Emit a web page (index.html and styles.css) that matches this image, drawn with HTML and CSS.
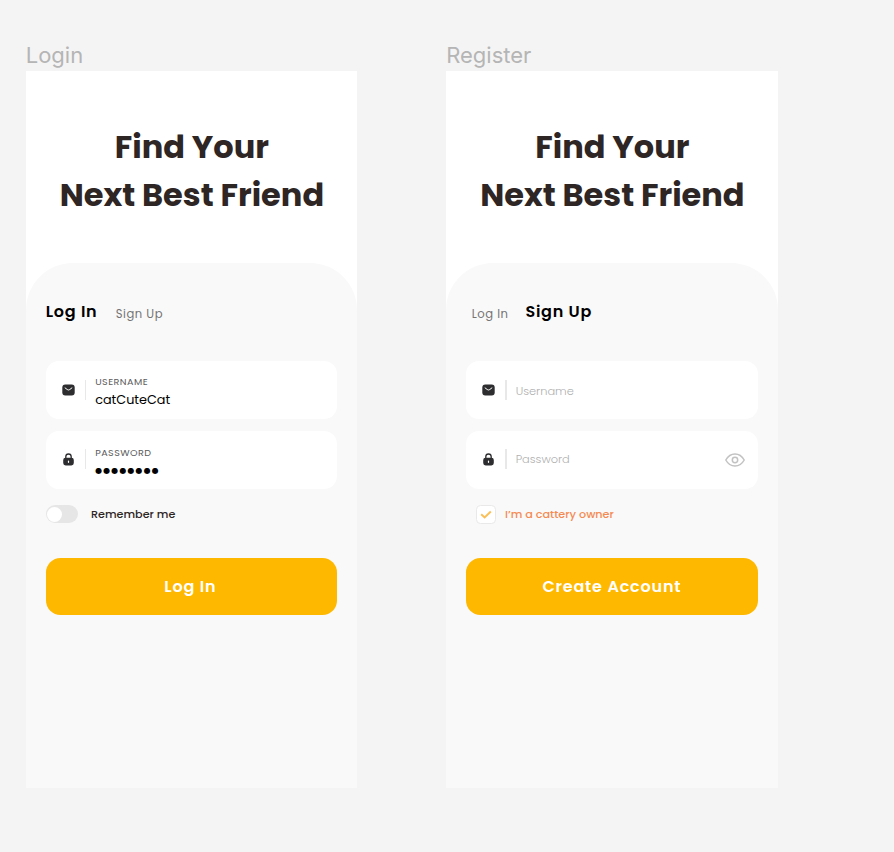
FILE: index.html
```html
<!DOCTYPE html>
<html lang="en">
<head>
<meta charset="utf-8">
<title>Find Your Next Best Friend</title>
<link rel="stylesheet" href="styles.css">
</head>
<body>
<svg class="defs" aria-hidden="true">
  <symbol id="mail" viewBox="0 0 13 12">
    <rect x=".3" y=".4" width="12.4" height="11.2" rx="3" fill="#2d2d30"/>
    <path d="M3.1 3.9 5.2 5.5Q6.5 6.5 7.8 5.5L9.9 3.9" fill="none" stroke="#fff" stroke-width="1" stroke-linecap="round"/>
  </symbol>
  <symbol id="lock" viewBox="0 0 12 13">
    <path d="M3.3 6V3.7a2.7 2.7 0 0 1 5.4 0V6" fill="none" stroke="#2d2d30" stroke-width="1.3"/>
    <rect x=".7" y="4.7" width="10.6" height="7.8" rx="2.4" fill="#2d2d30"/>
    <path d="M6 8v1.3" stroke="#fff" stroke-width="1.2" stroke-linecap="round"/>
  </symbol>
</svg>
<main class="board">
  <section class="artboard">
    <div class="label">Login</div>
    <div class="frame">
      <h1 class="title">Find Your<br>Next Best Friend</h1>
      <div class="panel">
        <nav class="tabs">
          <span class="tab active">Log In</span>
          <span class="tab">Sign Up</span>
        </nav>
        <div class="field">
          <svg class="icon"><use href="#mail"/></svg>
          <span class="divider"></span>
          <div class="entry">
            <span class="caption">USERNAME</span>
            <span class="value">catCuteCat</span>
          </div>
        </div>
        <div class="field">
          <svg class="icon lock"><use href="#lock"/></svg>
          <span class="divider raised"></span>
          <div class="entry secret">
            <span class="caption">PASSWORD</span>
            <span class="dots">●●●●●●●●</span>
          </div>
        </div>
        <div class="option">
          <span class="toggle"></span>
          <span class="remember">Remember me</span>
        </div>
        <button class="submit login">Log In</button>
      </div>
    </div>
  </section>
  <section class="artboard">
    <div class="label">Register</div>
    <div class="frame">
      <h1 class="title">Find Your<br>Next Best Friend</h1>
      <div class="panel">
        <nav class="tabs signup">
          <span class="tab">Log In</span>
          <span class="tab active">Sign Up</span>
        </nav>
        <div class="field">
          <svg class="icon"><use href="#mail"/></svg>
          <span class="divider"></span>
          <span class="placeholder user">Username</span>
        </div>
        <div class="field">
          <svg class="icon lock"><use href="#lock"/></svg>
          <span class="divider raised"></span>
          <span class="placeholder pass">Password</span>
          <svg class="eye" viewBox="0 0 20 14">
            <path d="M.8 7C3 3 6.2.9 10 .9S17 3 19.2 7C17 11 13.8 13.1 10 13.1S3 11 .8 7Z"/>
            <circle cx="10" cy="7" r="2.7"/>
          </svg>
        </div>
        <div class="option owner-row">
          <span class="check"><svg viewBox="0 0 12 9"><path d="M1.2 4.3 4.6 7.4 10.8 1.5"/></svg></span>
          <span class="owner">I’m a cattery owner</span>
        </div>
        <button class="submit">Create Account</button>
      </div>
    </div>
  </section>
</main>
</body>
</html>
```
FILE: styles.css
```css
* { box-sizing: border-box; }
body {
  margin: 0;
  height: 852px;
  background: #f4f4f4;
  font-family: Poppins, Inter, sans-serif;
  overflow: hidden;
}
.defs { display: none; }
.board {
  display: flex;
  gap: 89.1px;
  padding: 41px 0 0 25.7px;
}
.artboard { width: 331.4px; }
.label {
  height: 30px;
  font: 400 22px/28px Inter, sans-serif;
  color: #b5b5b5;
}
.frame {
  display: flex;
  flex-direction: column;
  height: 717px;
  background: #fff;
}
.title {
  flex: none;
  height: 191.6px;
  margin: 0;
  padding: 52px 0 0 1px;
  font-size: 32px;
  line-height: 48px;
  font-weight: 700;
  text-align: center;
  color: #2e2525;
}
.panel {
  flex: 1;
  padding: 37.2px 20px 0 20px;
  border-radius: 47px 47px 0 0;
  background: #f9f9f9;
}
.tabs {
  display: flex;
  gap: 18.4px;
  height: 61.6px;
}
.tabs.signup { gap: 17px; padding-left: 5.6px; }
.tab {
  padding-top: 6px;
  font-size: 11.6px;
  line-height: 16px;
  letter-spacing: .5px;
  color: #747474;
}
.tab.active {
  padding: 0;
  font-size: 16px;
  line-height: 24px;
  font-weight: 600;
  letter-spacing: .75px;
  color: #000;
}
.field {
  display: flex;
  align-items: center;
  height: 57.6px;
  margin-bottom: 12.2px;
  padding: 0 12.5px 0 16px;
  border-radius: 13px;
  background: #fff;
}
.icon { flex: none; width: 13px; height: 12px; }
.icon.lock { height: 13px; margin-bottom: 1px; }
.divider {
  flex: none;
  width: 1.5px;
  height: 20px;
  margin: 0 9px 0 10px;
  background: #e8e8e8;
}
.divider.raised { margin-bottom: 2px; }
.entry {
  display: flex;
  flex-direction: column;
  gap: 3.4px;
  padding-top: 5px;
}
.caption {
  font-size: 9.6px;
  line-height: 12px;
  letter-spacing: .45px;
  color: #5c5c5c;
}
.value { font-size: 12.8px; line-height: 18px; color: #000; }
.secret { padding-top: 7px; }
.dots {
  font: 8px/18px "DejaVu Sans", sans-serif;
  letter-spacing: 1.1px;
  color: #000;
}
.placeholder {
  font-size: 11.4px;
  line-height: 16px;
  font-weight: 300;
  color: #b0b0b0;
}
.placeholder.user { padding-top: 2px; }
.placeholder.pass { padding-bottom: 2px; }
.eye {
  width: 20px;
  height: 14px;
  margin-left: auto;
  fill: none;
  stroke: #c2c2c2;
  stroke-width: 1.5;
}
.option {
  display: flex;
  align-items: center;
  height: 20px;
  margin: 15.6px 0 33.5px;
  font-size: 11.2px;
  line-height: 16px;
  font-weight: 500;
}
.toggle {
  width: 32px;
  height: 18px;
  margin-right: 13.3px;
  padding: 1.5px;
  border-radius: 9px;
  background: #e6e6e6;
}
.toggle::before {
  content: "";
  display: block;
  width: 15px;
  height: 15px;
  border-radius: 50%;
  background: #fff;
}
.remember { color: #2e2525; }
.owner-row { padding-left: 10px; }
.check {
  display: grid;
  place-items: center;
  width: 19.5px;
  height: 19.5px;
  margin-right: 9.4px;
  border: 1px solid #e9e9e9;
  border-radius: 4.5px;
  background: #fff;
}
.check svg {
  width: 12px;
  height: 9px;
  fill: none;
  stroke: #fbbf55;
  stroke-width: 1.9;
}
.owner { color: #f58a52; }
.submit {
  display: block;
  width: 100%;
  height: 57.6px;
  padding: 0;
  border: 0;
  border-radius: 14.5px;
  background: #ffb800;
  font: 600 16px/24px Poppins, Inter, sans-serif;
  letter-spacing: .8px;
  color: #fff;
}
.submit.login { padding-right: 2px; }
```
